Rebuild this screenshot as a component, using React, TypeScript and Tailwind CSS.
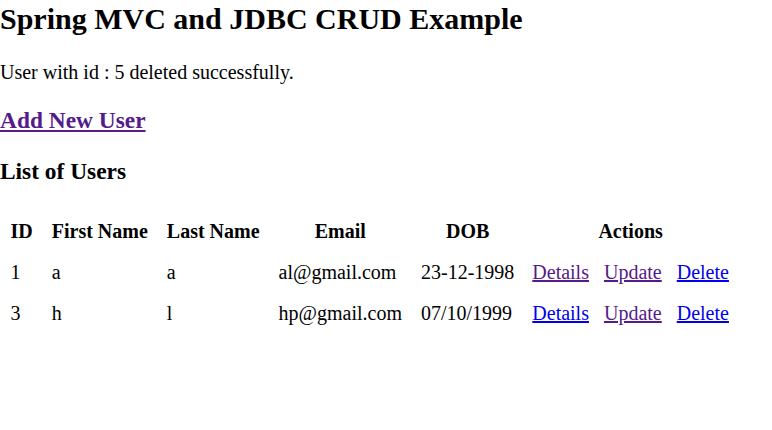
export default function App() {
  const visited = "text-[#551A8B] underline";
  const link = "text-[#0000EE] underline";
  return (
    <div className="min-h-[430px] bg-white text-black font-['Liberation_Serif','Times_New_Roman',serif] text-[20px] leading-[normal]">
      <h2 className="pt-[2px] text-[30px] font-bold leading-[normal] mb-[25px]">Spring MVC and JDBC CRUD Example</h2>
      <p className="mb-[23.4px]">User with id : 5 deleted successfully.</p>
      <h3 className="text-[23.4px] font-bold leading-[normal] mb-[23.4px]">
        <a href="#" className={visited}>Add New User</a>
      </h3>
      <h3 className="text-[23.4px] font-bold leading-[normal] mb-[25px]">List of Users</h3>
      <table className="border-separate border-spacing-[2px]">
        <thead>
          <tr>
            <th className="px-[8.5px] py-[8px] text-center font-bold">ID</th>
            <th className="px-[8.5px] py-[8px] text-center font-bold">First Name</th>
            <th className="px-[8.5px] py-[8px] text-center font-bold">Last Name</th>
            <th className="px-[8.5px] py-[8px] text-center font-bold">Email</th>
            <th className="pl-[8.5px] pr-[7.5px] py-[8px] text-center font-bold">DOB</th>
            <th className="px-[8.5px] py-[8px] text-center font-bold">Actions</th>
          </tr>
        </thead>
        <tbody>
          <tr>
            <td className="px-[8.5px] py-[8px]">1</td>
            <td className="px-[8.5px] py-[8px]">a</td>
            <td className="px-[8.5px] py-[8px]">a</td>
            <td className="px-[8.5px] py-[8px]">al@gmail.com</td>
            <td className="pl-[8.5px] pr-[7.5px] py-[8px]">23-12-1998</td>
            <td className="px-[8.5px] py-[8px] whitespace-nowrap">
              <a href="#" className={visited}>Details</a>
              <a href="#" className={`${visited} ml-[15px]`}>Update</a>
              <a href="#" className={`${link} ml-[15px]`}>Delete</a>
            </td>
          </tr>
          <tr>
            <td className="px-[8.5px] py-[8px]">3</td>
            <td className="px-[8.5px] py-[8px]">h</td>
            <td className="px-[8.5px] py-[8px]">l</td>
            <td className="px-[8.5px] py-[8px]">hp@gmail.com</td>
            <td className="pl-[8.5px] pr-[7.5px] py-[8px]">07/10/1999</td>
            <td className="px-[8.5px] py-[8px] whitespace-nowrap">
              <a href="#" className={link}>Details</a>
              <a href="#" className={`${visited} ml-[15px]`}>Update</a>
              <a href="#" className={`${link} ml-[15px]`}>Delete</a>
            </td>
          </tr>
        </tbody>
      </table>
    </div>
  );
}
